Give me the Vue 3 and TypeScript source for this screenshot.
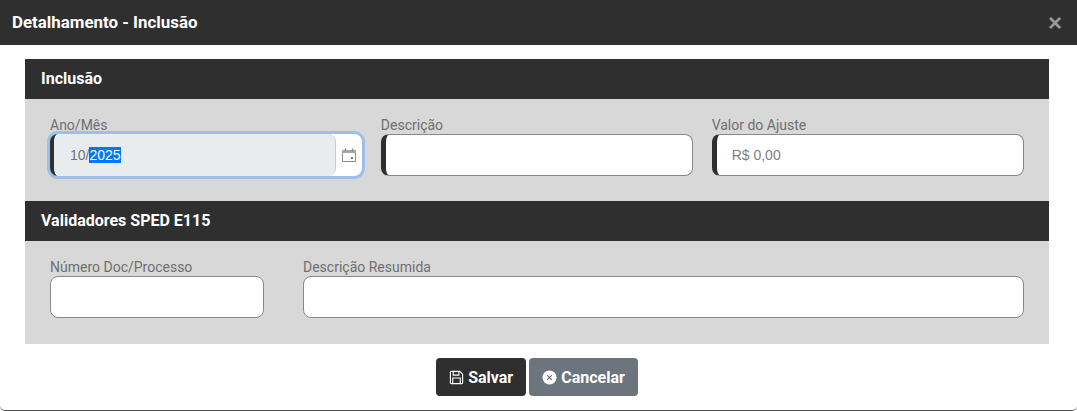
<script setup lang="ts">
import { onMounted, ref } from "vue";

const firstRow = [
  { label: "Descrição", placeholder: "" },
  { label: "Valor do Ajuste", placeholder: "R$ 0,00" },
];

const dateInput = ref<HTMLInputElement | null>(null);

onMounted(() => {
  const el = dateInput.value;
  if (!el) return;
  el.focus();
  el.setSelectionRange(3, 7);
});
</script>

<template>
  <div class="modal">
    <header class="modal-header">
      <h1>Detalhamento - Inclusão</h1>
      <span class="close">×</span>
    </header>

    <div class="modal-body">
      <section class="panel">
        <h2 class="panel-title">Inclusão</h2>
        <div class="panel-body first">
          <div class="field">
            <label>Ano/Mês</label>
            <div class="date-box">
              <input ref="dateInput" class="date-value" type="text" value="10/2025" />
              <svg class="calendar" width="14" height="14" viewBox="0 0 14 14">
                <path d="M.5 2.500h13v11H.5z" fill="none" stroke="#8a8a8a" />
                <path d="M0 2h14v3H0z" fill="#a6a6a6" />
                <path d="M3.500 .5v3M10.500 .5v3" stroke="#8a8a8a" stroke-width="1.400" />
                <rect x="9" y="9" width="2" height="2" fill="#777" />
              </svg>
            </div>
          </div>
          <div v-for="f in firstRow" :key="f.label" class="field">
            <label>{{ f.label }}</label>
            <input class="marked" type="text" :placeholder="f.placeholder" />
          </div>
        </div>
      </section>

      <section class="panel">
        <h2 class="panel-title">Validadores SPED E115</h2>
        <div class="panel-body second">
          <div class="field">
            <label>Número Doc/Processo</label>
            <input type="text" />
          </div>
          <div class="field">
            <label>Descrição Resumida</label>
            <input type="text" />
          </div>
        </div>
      </section>

      <div class="actions">
        <button class="btn save">
          <svg width="15" height="15" viewBox="0 0 16 16" fill="none" stroke="#fff" stroke-width="1.200">
            <path d="M2.500 1.500h9l3 3v9a1 1 0 0 1-1 1h-11a1 1 0 0 1-1-1v-11a1 1 0 0 1 1-1z" />
            <path d="M4.500 1.500v4h6v-4M4 14.500v-6h8v6" />
          </svg>
          Salvar
        </button>
        <button class="btn cancel">
          <svg width="15" height="15" viewBox="0 0 16 16">
            <circle cx="8" cy="8" r="7.500" fill="#fff" />
            <path d="M5.500 5.500l5 5M10.500 5.500l-5 5" stroke="#6c757d" stroke-width="1.300" />
          </svg>
          Cancelar
        </button>
      </div>
    </div>
  </div>
</template>

<style scoped>
.modal {
  width: 1077px;
  height: 411px;
  box-sizing: border-box;
  background: #fff;
  border-bottom: 1px solid #555;
  border-bottom-right-radius: 5px;
  border-bottom-left-radius: 5px;
  font-family: Roboto, "Liberation Sans", sans-serif;
  overflow: hidden;
}

.modal-header {
  height: 45px;
  background: #2f2f2f;
  display: flex;
  align-items: center;
  justify-content: space-between;
  padding: 0 15px 2px 12px;
  box-sizing: border-box;
}

.modal-header h1 {
  margin: 0;
  font-size: 16.900px;
  font-weight: 700;
  color: #fff;
}

.close {
  color: #999;
  font-size: 24px;
  font-weight: 700;
  line-height: 1;
  margin-top: 3px;
  font-family: "Liberation Sans", sans-serif;
}

.modal-body {
  padding: 14px 28px 0 25px;
}

.panel-title {
  margin: 0;
  height: 40px;
  line-height: 39px;
  padding-left: 16px;
  background: #2f2f2f;
  color: #fff;
  font-size: 16px;
  font-weight: 700;
}

.panel-body {
  background: #d8d8d8;
  display: grid;
  padding: 17px 25px 25px;
}

.first {
  grid-template-columns: repeat(3, 1fr);
  column-gap: 18.500px;
}

.second {
  grid-template-columns: 214px 1fr;
  column-gap: 39px;
  padding-bottom: 26px;
}

.field {
  display: flex;
  flex-direction: column;
  min-width: 0;
}

label {
  font-size: 14px;
  line-height: 18px;
  color: #6f6f6f;
}

input {
  height: 42px;
  box-sizing: border-box;
  width: 100%;
  border: 1px solid #888;
  border-radius: 8px;
  background: #fff;
  padding: 0 12px;
  font: 14px "Liberation Sans", Arial, sans-serif;
  outline: none;
}

input.marked {
  border-left: 5px solid #2f2f2f;
  padding-left: 15px;
}

input::placeholder {
  color: #808080;
  opacity: 1;
}

.date-box {
  height: 42px;
  box-sizing: border-box;
  display: flex;
  align-items: stretch;
  background: #fff;
  border-left: 4px solid #2f2f2f;
  border-radius: 8px;
  box-shadow: 0 0 0 3px #9bc1ea;
}

input.date-value {
  flex: 1;
  width: auto;
  min-width: 0;
  height: 42px;
  background: #e9ecef;
  border: none;
  border-right: 1px solid #ccc;
  border-radius: 8px;
  padding-left: 16px;
  color: #6c757d;
}

input.date-value::selection {
  background: #0075ff;
  color: #fff;
}

.calendar {
  align-self: center;
  margin: 0 6px 1px 6px;
}

.actions {
  display: flex;
  justify-content: center;
  gap: 3px;
  margin-top: 14px;
}

.btn {
  height: 38px;
  border: none;
  border-radius: 4px;
  color: #fff;
  font: 700 16px Roboto, sans-serif;
  display: flex;
  align-items: center;
  gap: 4px;
  padding: 0 13px;
}

.save {
  background: #2f2f2f;
}

.cancel {
  background: #6c757d;
}
</style>
